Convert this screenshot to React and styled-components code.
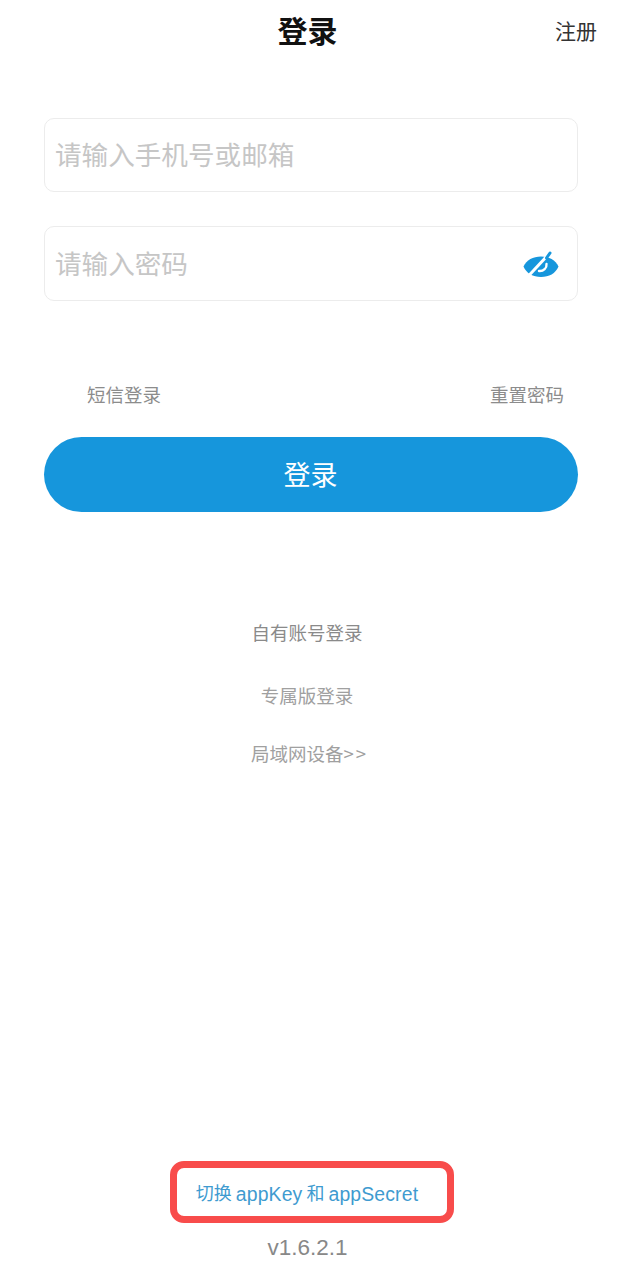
import styled, { createGlobalStyle } from 'styled-components';

const GlobalStyle = createGlobalStyle`
	html, body {
		margin: 0;
		padding: 0;
		background: #fff;
	}
	* {
		box-sizing: border-box;
	}
`;

const Page = styled.div`
	width: 626px;
	height: 1278px;
	overflow: hidden;
	display: flex;
	flex-direction: column;
	padding: 0 48px 0 44px;
	font-family: 'Noto Sans CJK SC', 'Liberation Sans', sans-serif;
	background: #fff;
`;

const Header = styled.header`
	height: 62px;
	display: grid;
	grid-template-columns: 1fr auto 1fr;
	align-items: center;
	margin: 0 -19px 0 0;
`;

const Title = styled.h1`
	grid-column: 2;
	margin: 0 0 4px -26px;
	font-size: 30px;
	line-height: 40px;
	font-weight: 700;
	color: #111;
`;

const RegisterLink = styled.a`
	justify-self: end;
	font-size: 21px;
	line-height: 28px;
	color: #333;
	margin-top: -2px;
`;

const Field = styled.div`
	width: 534px;
	height: ${(p) => p.$height}px;
	display: flex;
	align-items: center;
	padding: 0 18px 0 12px;
	margin-top: ${(p) => p.$top}px;
	border: 1px solid #ececec;
	border-radius: 10px;
`;

const Input = styled.input`
	flex: 1;
	min-width: 0;
	border: 0;
	outline: 0;
	padding: 0 0 ${(p) => p.$lift}px;
	margin-left: -2px;
	background: none;
	font: inherit;
	font-size: 26.6px;
	color: #333;
	&::placeholder {
		color: #c6c6c6;
		opacity: 1;
	}
`;

const EyeIcon = styled.svg`
	flex: none;
	width: 36px;
	height: 28px;
`;

const LinkRow = styled.div`
	width: 534px;
	display: flex;
	justify-content: space-between;
	padding: 0 14px 0 43px;
	margin-top: 80px;
`;

const GreyLink = styled.a`
	font-size: 18.5px;
	line-height: 26px;
	color: #8c8c8c;
`;

const LoginButton = styled.button`
	width: 534px;
	height: 75px;
	margin-top: 30px;
	padding: 0 1px 2px 0;
	border: 0;
	border-radius: 38px;
	background: #1696dc;
	color: #fff;
	font: inherit;
	font-size: 27px;
	line-height: 36px;
`;

const AltList = styled.div`
	width: 534px;
	display: flex;
	flex-direction: column;
	align-items: center;
	padding-right: 8px;
	margin-top: 107px;
`;

const AltLink = styled.a`
	font-size: 18.5px;
	line-height: 26px;
	color: ${(p) => p.$color};
	margin-top: ${(p) => p.$top}px;
	margin-left: ${(p) => p.$left || 0}px;
`;

const Arrows = styled.span`
	letter-spacing: 2px;
`;

const Footer = styled.footer`
	margin-top: auto;
	width: 534px;
	display: flex;
	flex-direction: column;
	align-items: center;
	padding-bottom: 15px;
`;

const SwitchBox = styled.div`
	width: 284px;
	height: 62px;
	margin-left: 1px;
	display: flex;
	align-items: center;
	justify-content: center;
	gap: 4px;
	padding: 3px 9px 0 0;
	border: 7px solid #f84c4b;
	border-radius: 14px;
	font-family: 'Liberation Sans', 'Noto Sans CJK SC', sans-serif;
	font-size: 18px;
	line-height: 26px;
	color: #3f9bd0;
	white-space: nowrap;
`;

const LatinWord = styled.span`
	font-size: 19.4px;
	letter-spacing: 0.15px;
`;

const Version = styled.div`
	margin: 10px 7px 0 0;
	font-family: 'Liberation Sans', sans-serif;
	font-size: 22.5px;
	line-height: 30px;
	color: #888;
`;

function Eye() {
	return (
		<EyeIcon viewBox="0 0 36 28" aria-hidden="true">
			<path
				fill="#1696dc"
				d="M0.5 16.5 C3.5 10 10 6.5 18 6.5 C26 6.5 32.5 10 35.5 16.5 C32.5 23.5 26 27 18 27 C10 27 3.5 23.5 0.5 16.5 Z"
			/>
			<path fill="none" stroke="#fff" strokeWidth="3" d="M4.5 27 L25 5" />
			<path fill="none" stroke="#1696dc" strokeWidth="3" strokeLinecap="round" d="M23.5 8 L27 3" />
			<path
				fill="none"
				stroke="#fff"
				strokeWidth="2.4"
				strokeLinecap="round"
				d="M23.5 14 C24 18 20.5 21.5 16 21"
			/>
		</EyeIcon>
	);
}

export default function App() {
	return (
		<>
			<GlobalStyle />
			<Page>
				<Header>
					<Title>登录</Title>
					<RegisterLink>注册</RegisterLink>
				</Header>
				<Field $top={56} $height={74}>
					<Input $lift={3} placeholder="请输入手机号或邮箱" />
				</Field>
				<Field $top={34} $height={75}>
					<Input $lift={2} placeholder="请输入密码" />
					<Eye />
				</Field>
				<LinkRow>
					<GreyLink>短信登录</GreyLink>
					<GreyLink>重置密码</GreyLink>
				</LinkRow>
				<LoginButton>登录</LoginButton>
				<AltList>
					<AltLink $top={0} $color="#8a8a8a">自有账号登录</AltLink>
					<AltLink $top={37} $color="#a0a0a0">专属版登录</AltLink>
					<AltLink $top={32} $left={5} $color="#a0a0a0">局域网设备<Arrows>&gt;&gt;</Arrows></AltLink>
				</AltList>
				<Footer>
					<SwitchBox>
						<span>切换</span>
						<LatinWord>appKey</LatinWord>
						<span>和</span>
						<LatinWord>appSecret</LatinWord>
					</SwitchBox>
					<Version>v1.6.2.1</Version>
				</Footer>
			</Page>
		</>
	);
}
